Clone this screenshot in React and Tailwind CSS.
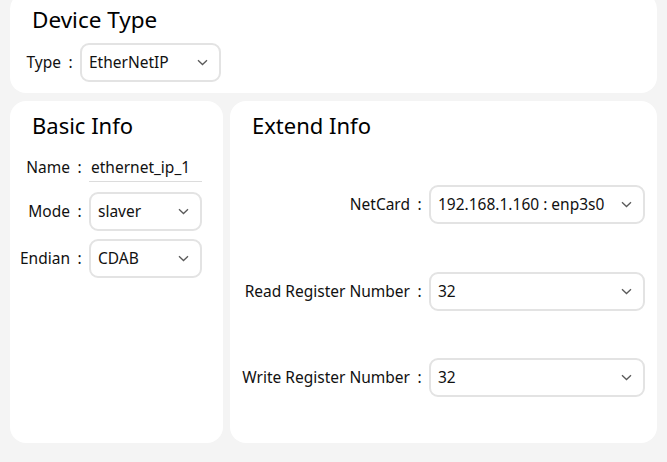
import React from "react";

const font = { fontFamily: '"Noto Sans", "Noto Sans CJK SC", sans-serif' };

function Chevron() {
  return (
    <svg width="11" height="7" viewBox="0 0 11 7" className="shrink-0">
      <path d="M1 1.2 L5.5 5.5 L10 1.2" fill="none" stroke="#5a5a5a" strokeWidth="1.3" />
    </svg>
  );
}

function Select({ value, className = "" }) {
  return (
    <div
      className={
        "flex items-center justify-between rounded-[9px] border-2 border-[#e3e3e3] bg-white pl-[7px] pr-[11px] text-[15.5px] text-[#111] " +
        className
      }
    >
      <span>{value}</span>
      <Chevron />
    </div>
  );
}

function Label({ text, className = "" }) {
  return (
    <div className={"flex shrink-0 items-center justify-end text-[15.5px] " + className}>
      <span>{text}</span>
      <span className="w-[19px] text-center">:</span>
    </div>
  );
}

export default function App() {
  return (
    <div
      className="flex h-[462px] w-[667px] flex-col overflow-hidden bg-[#f4f4f4] px-[10px] text-[#111]"
      style={font}
    >
      {/* Device Type */}
      <div className="mt-[-7px] flex h-[100px] shrink-0 flex-col rounded-2xl bg-white pt-[13px]">
        <div className="pl-[22px] text-[22.5px] leading-[28px] text-black">Device Type</div>
        <div className="mt-[9px] flex items-center pl-[15px]">
          <Label text="Type" className="w-[55px]" />
          <Select value="EtherNetIP" className="h-[39px] w-[141px]" />
        </div>
      </div>

      <div className="mt-[8px] flex h-[342px] gap-[7px]">
        {/* Basic Info */}
        <div className="flex w-[213px] flex-col rounded-2xl bg-white pt-[10px]">
          <div className="pl-[22px] text-[22px] leading-[28px] text-black">Basic Info</div>
          <div className="mt-[15px] flex items-center">
            <Label text="Name" className="w-[79px]" />
            <div className="flex h-[28px] w-[113px] items-center border-b border-[#dcdcdc] pl-[2px] text-[15.5px]">
              ethernet_ip_1
            </div>
          </div>
          <div className="mt-[10px] flex items-center">
            <Label text="Mode" className="w-[79px]" />
            <Select value="slaver" className="h-[39px] w-[113px]" />
          </div>
          <div className="mt-[8px] flex items-center">
            <Label text="Endian" className="w-[79px]" />
            <Select value="CDAB" className="h-[39px] w-[113px]" />
          </div>
        </div>

        {/* Extend Info */}
        <div className="flex flex-1 flex-col rounded-2xl bg-white pt-[10px]">
          <div className="pl-[22px] text-[22px] leading-[28px] text-black">Extend Info</div>
          <div className="mt-[46px] flex items-center">
            <Label text="NetCard" className="w-[199px]" />
            <Select value="192.168.1.160 : enp3s0" className="h-[39px] w-[216px]" />
          </div>
          <div className="mt-[48px] flex items-center">
            <Label text="Read Register Number" className="w-[199px]" />
            <Select value="32" className="h-[39px] w-[216px]" />
          </div>
          <div className="mt-[47px] flex items-center">
            <Label text="Write Register Number" className="w-[199px]" />
            <Select value="32" className="h-[39px] w-[216px]" />
          </div>
        </div>
      </div>
    </div>
  );
}
